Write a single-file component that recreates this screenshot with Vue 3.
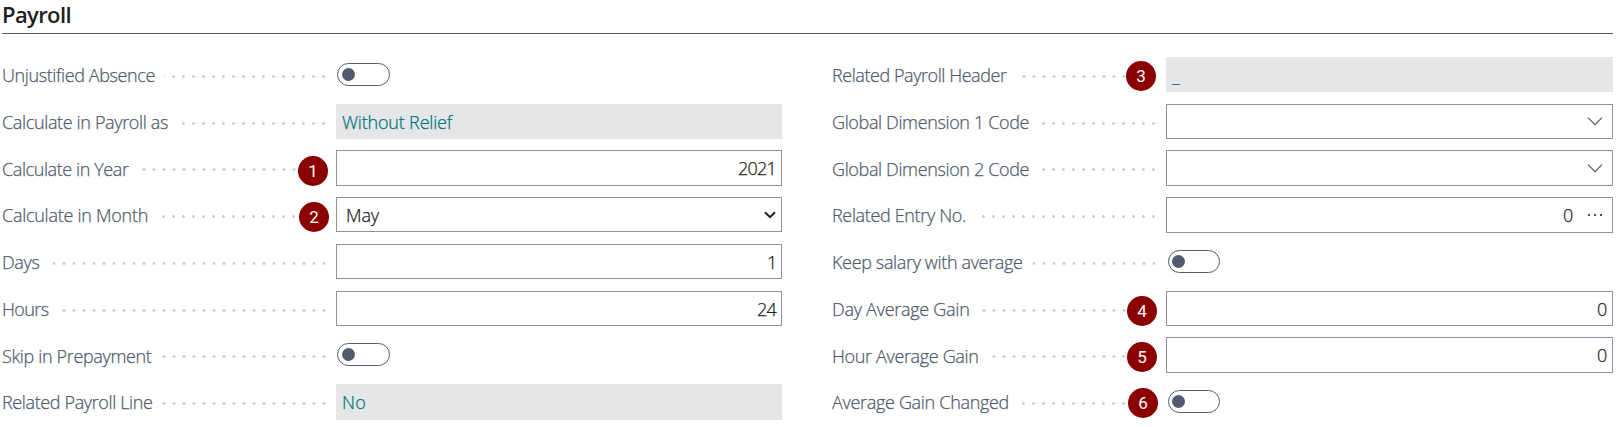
<script setup>
const vFit = {
  mounted(el, { value }) {
    const natural = el.getBoundingClientRect().width
    const count = el.textContent.length
    el.style.letterSpacing = `${(value - natural) / count}px`
  },
}

const columns = [
  {
    side: 'left',
    rows: [
      { label: 'Unjustified Absence', width: 153, type: 'toggle' },
      { label: 'Calculate in Payroll as', width: 166, type: 'readonly', value: 'Without Relief', valueWidth: 110 },
      { label: 'Calculate in Year', width: 126.5, type: 'number', value: '2021', valueWidth: 38, badge: 1, tall: true },
      { label: 'Calculate in Month', width: 146, type: 'select', value: 'May', valueWidth: 33, badge: 2 },
      { label: 'Days', width: 37.5, type: 'number', value: '1', valueWidth: 9 },
      { label: 'Hours', width: 46.5, type: 'number', value: '24', valueWidth: 19 },
      { label: 'Skip in Prepayment', width: 149.5, type: 'toggle', tall: true },
      { label: 'Related Payroll Line', width: 150.5, type: 'readonly', value: 'No', valueWidth: 24, tall: true },
    ],
  },
  {
    side: 'right',
    rows: [
      { label: 'Related Payroll Header', width: 174.5, type: 'readonly', value: '_', valueWidth: 10, badge: 3 },
      { label: 'Global Dimension 1 Code', width: 197, type: 'lookup' },
      { label: 'Global Dimension 2 Code', width: 197, type: 'lookup', tall: true },
      { label: 'Related Entry No.', width: 134, type: 'assist', value: '0', valueWidth: 10, tall: true },
      { label: 'Keep salary with average', width: 190.5, type: 'toggle' },
      { label: 'Day Average Gain', width: 137.5, type: 'number', value: '0', valueWidth: 10, badge: 4 },
      { label: 'Hour Average Gain', width: 146.5, type: 'number', value: '0', valueWidth: 10, badge: 5, tall: true },
      { label: 'Average Gain Changed', width: 177, type: 'toggle', badge: 6 },
    ],
  },
]
</script>

<template>
  <section class="payroll">
    <h2 class="title"><span v-fit="69">Payroll</span></h2>
    <div class="columns">
      <div v-for="col in columns" :key="col.side" class="column" :class="col.side">
        <div v-for="row in col.rows" :key="row.label" class="row">
          <div class="caption">
            <span v-fit="row.width" class="label">{{ row.label }}</span>
            <span class="leader"></span>
            <span v-if="row.badge" class="badge" :class="'b' + row.badge">{{ row.badge }}</span>
          </div>
          <div v-if="row.type === 'toggle'" class="toggle"><i></i></div>
          <div v-else class="field" :class="[row.type, { tall: row.tall }]">
            <span v-if="row.value" v-fit="row.valueWidth" class="value">{{ row.value }}</span>
            <svg v-if="row.type === 'select'" class="arrow" width="12" height="8" viewBox="0 0 12 8">
              <path d="M1 1.3 6 6.2 11 1.3" fill="none" stroke="#1f1f1f" stroke-width="2" />
            </svg>
            <svg v-if="row.type === 'lookup'" class="chevron" width="16" height="9" viewBox="0 0 16 9">
              <path d="M1 .7 8 7.7 15 .7" fill="none" stroke="#555" stroke-width="1.1" />
            </svg>
            <svg v-if="row.type === 'assist'" class="dots" width="14" height="2" viewBox="0 0 14 2">
              <path d="M0 0h2v2H0zM6 0h2v2H6zM12 0h2v2h-2z" fill="#505050" />
            </svg>
          </div>
        </div>
      </div>
    </div>
  </section>
</template>

<style>
body {
  margin: 0;
  background: #fff;
}
</style>

<style scoped>
.payroll {
  box-sizing: border-box;
  width: 1617px;
  height: 427px;
  padding: 0 4px 0 2px;
  overflow: hidden;
  font-family: 'Open Sans', 'Noto Sans', sans-serif;
  font-size: 18px;
  font-weight: 300;
  color: #212121;
}
.title {
  box-sizing: border-box;
  height: 34px;
  margin: 0;
  border-bottom: 1px solid #505c6d;
  font-size: 22px;
  font-weight: 600;
  line-height: 29px;
}
.columns {
  display: flex;
  justify-content: space-between;
  padding-top: 23px;
}
.column {
  display: grid;
  grid-template-rows: 47px 46px 47px 47px 47px 46px 47px 36px;
}
.left {
  width: 780px;
}
.right {
  width: 781px;
}
.row {
  display: flex;
  align-items: flex-start;
}
.caption {
  position: relative;
  display: flex;
  flex: none;
  width: 334px;
  height: 36px;
  line-height: 37px;
  color: #505c6d;
}
.row:nth-child(3) .caption,
.row:nth-child(7) .caption {
  line-height: 38px;
}
.label,
.value {
  flex: none;
  white-space: nowrap;
  -webkit-text-stroke: 0.25px currentColor;
}
.leader {
  flex: 1;
  height: 4px;
  margin: 18px 7px 0 9px;
  background: radial-gradient(circle at 4.5px 1.5px, #cccccc 1px, transparent 1.7px) right top / 10px 4px repeat-x;
}
.badge {
  position: absolute;
  top: 5px;
  width: 30px;
  height: 30px;
  border-radius: 50%;
  background: #8b0000;
  color: #fff;
  font: 400 17px/30px Roboto, 'Liberation Sans', sans-serif;
  text-align: center;
}
.b1 {
  top: 6px;
  left: 296px;
}
.b2 {
  left: 297px;
}
.b3 {
  top: 4px;
  left: 294px;
}
.b4,
.b5 {
  left: 295px;
}
.b6 {
  top: 4px;
  left: 296px;
}
.toggle {
  box-sizing: border-box;
  width: 53px;
  height: 23px;
  margin: 6px 0 0 1px;
  padding: 4px;
  border: 1px solid #505c6d;
  border-radius: 12px;
}
.toggle i {
  display: block;
  width: 13px;
  height: 13px;
  border-radius: 50%;
  background: #505c6d;
}
.right .toggle {
  width: 52px;
  margin-left: 2px;
  padding-left: 3px;
}
.field {
  box-sizing: border-box;
  display: flex;
  align-items: center;
  flex: 1;
  height: 35px;
  padding: 0 5px;
  border: 1px solid #8b94a2;
  line-height: 33px;
}
.field.tall {
  height: 36px;
}
.value {
  padding-top: 1px;
}
.readonly {
  border-color: #e5e6e8;
  background: #e5e6e8;
  color: #00757d;
}
.number,
.assist,
.lookup {
  justify-content: flex-end;
}
.select {
  justify-content: space-between;
  padding-left: 9px;
}
.lookup {
  padding-right: 9px;
}
.assist {
  gap: 15px;
  padding-right: 10px;
}
</style>
